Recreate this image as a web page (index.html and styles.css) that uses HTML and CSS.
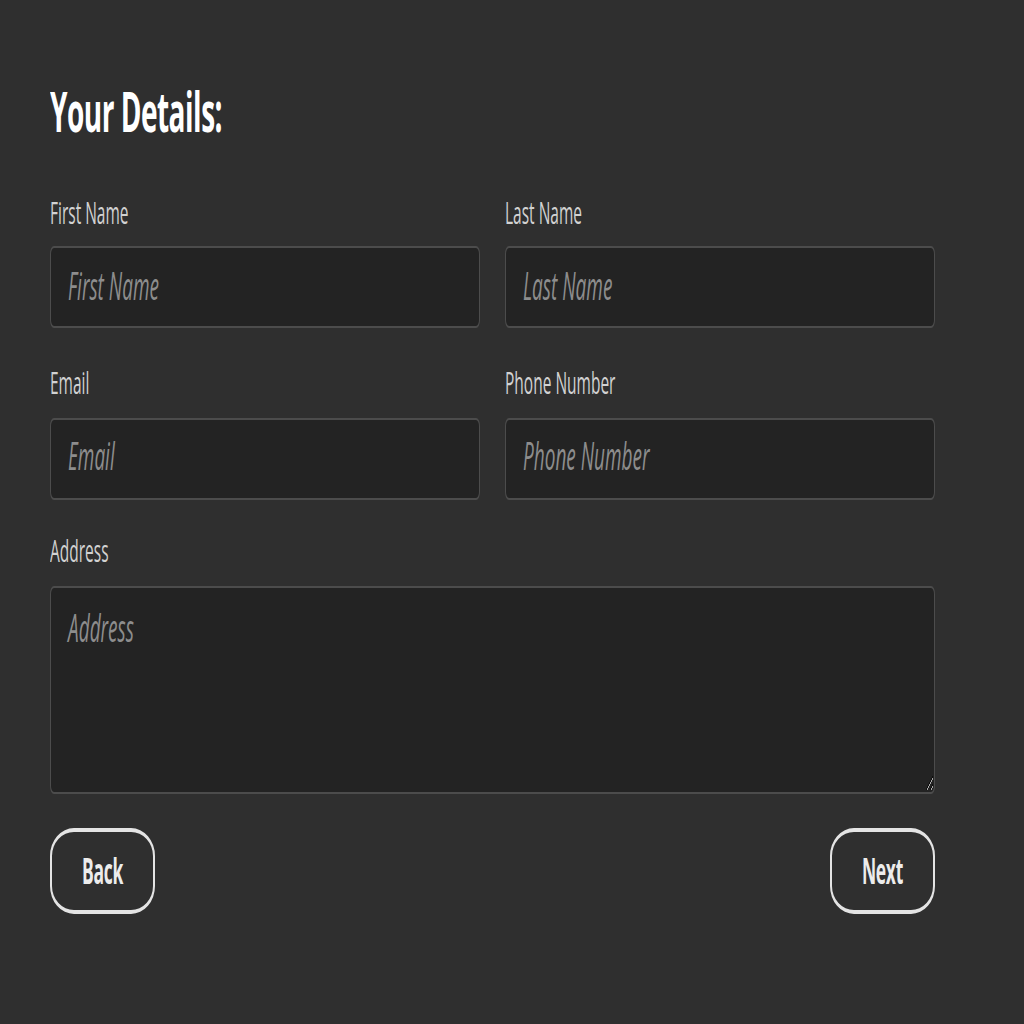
FILE: index.html
```html
<!DOCTYPE html>
<html lang="en">
<head>
  <meta charset="UTF-8" />
  <meta name="viewport" content="width=device-width, initial-scale=1.0"/>
  <title>Your Details</title>
  <link rel="stylesheet" href="styles.css">
</head>
<body>
  <main class="pagina">
    <h2 class="titulo">Your Details:</h2>

    <form class="formulario" onsubmit="return false">
      <div class="campo">
        <label for="nombre">First Name</label>
        <input type="text" id="nombre" placeholder="First Name">
      </div>
      <div class="campo">
        <label for="apellido">Last Name</label>
        <input type="text" id="apellido" placeholder="Last Name">
      </div>
      <div class="campo">
        <label for="correo">Email</label>
        <input type="email" id="correo" placeholder="Email">
      </div>
      <div class="campo">
        <label for="telefono">Phone Number</label>
        <input type="tel" id="telefono" placeholder="Phone Number">
      </div>
      <div class="campo ancho direccion">
        <label for="direccion">Address</label>
        <textarea id="direccion" placeholder="Address"></textarea>
      </div>

      <div class="acciones ancho">
        <button type="button" class="boton">Back</button>
        <button type="submit" class="boton">Next</button>
      </div>
    </form>
  </main>
</body>
</html>
```

FILE: styles.css
```css
html, body {
  margin: 0;
  padding: 0;
  background-color: #2f2f2f;
  height: 100%;
  overflow: hidden;
}
body {
  font-family: "Open Sans", "Liberation Sans", sans-serif;
  color: #d6d6d6;
}

/* the capture is stretched 2x vertically */
.pagina {
  width: 885px;
  padding: 37px 50px 0;
  transform: scaleY(2);
  transform-origin: top left;
}

.titulo {
  margin: 0 0 22.5px;
  font-size: 28px;
  line-height: 36px;
  font-weight: 700;
  color: #ffffff;
  letter-spacing: -0.5px;
}

.formulario {
  display: grid;
  grid-template-columns: 430px 430px;
  column-gap: 25px;
  row-gap: 17px;
}
.campo {
  display: flex;
  flex-direction: column;
}
.ancho {
  grid-column: 1 / -1;
}
.direccion {
  margin-top: -1.5px;
}

label {
  font-size: 15.5px;
  line-height: 20px;
  margin-bottom: 7.5px;
  color: #d2d2d2;
}

input, textarea {
  box-sizing: border-box;
  width: 100%;
  margin: 0;
  font-family: inherit;
  font-size: 19px;
  color: #e0e0e0;
  background-color: #232323;
  border: 1px solid #4c4c4c;
  border-radius: 4px;
  padding: 0 17px;
  outline: none;
}
input {
  height: 41px;
  padding-bottom: 2px;
}
textarea {
  height: 104px;
  padding-top: 7px;
  resize: vertical;
}
input::placeholder, textarea::placeholder {
  color: #8d8d8d;
  font-style: italic;
}

.acciones {
  display: flex;
  justify-content: space-between;
}
.boton {
  height: 43px;
  padding: 0 30px;
  background: transparent;
  border: 2px solid #e4e4e4;
  border-radius: 24px / 14px;
  color: #ececec;
  font-family: inherit;
  font-size: 17.5px;
  font-weight: 700;
  letter-spacing: -0.3px;
  cursor: pointer;
}
```
